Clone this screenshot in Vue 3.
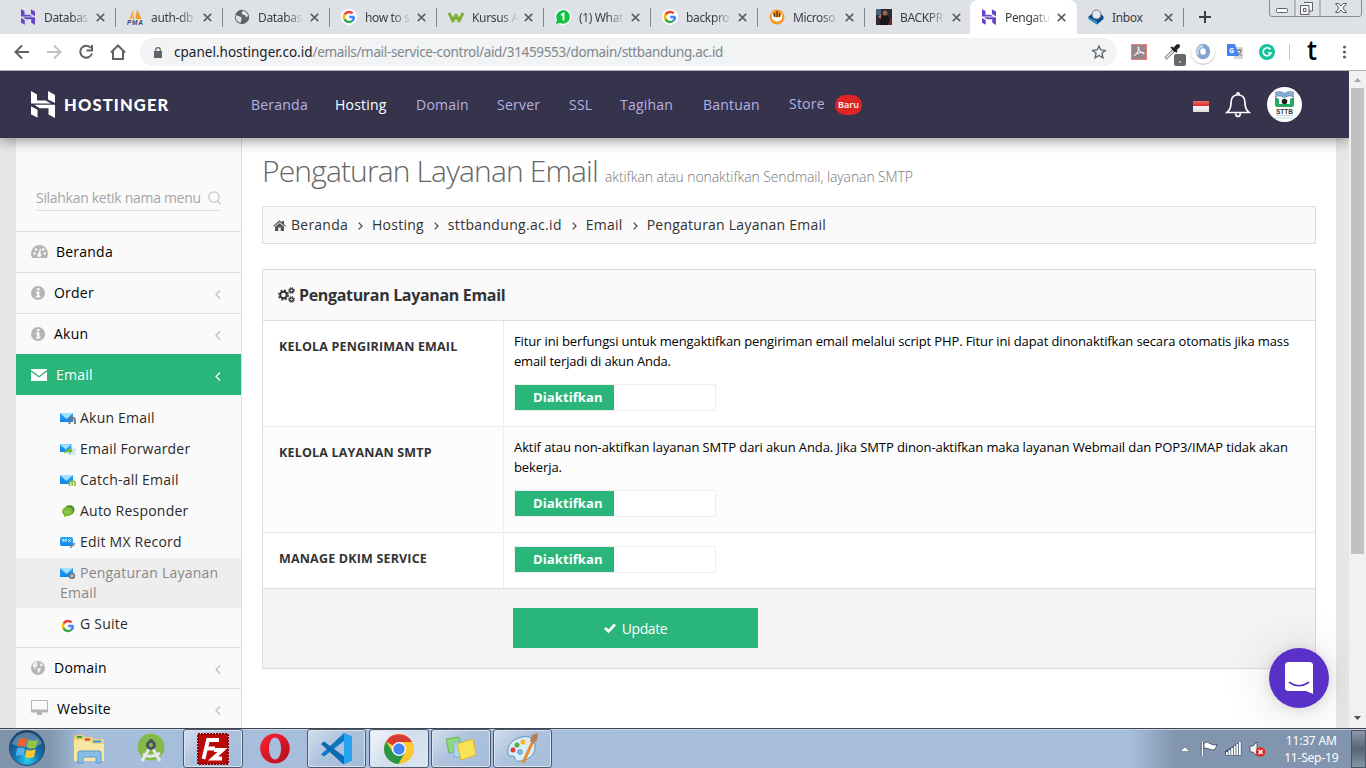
<script setup>
const tabs = [
  { icon: 'host', title: 'Databas' },
  { icon: 'pma', title: 'auth-db' },
  { icon: 'globe', title: 'Databas' },
  { icon: 'google', title: 'how to s' },
  { icon: 'w', title: 'Kursus A' },
  { icon: 'wa', title: '(1) What' },
  { icon: 'google', title: 'backpro' },
  { icon: 'udin', title: 'Microso' },
  { icon: 'photo', title: 'BACKPR' },
  { icon: 'host', title: 'Pengatu', active: true },
  { icon: 'inbox', title: 'Inbox', full: true },
]
const nav = [
  { t: 'Beranda', c: 'n1' },
  { t: 'Hosting', c: 'n2' },
  { t: 'Domain', c: 'n3' },
  { t: 'Server', c: 'n4' },
  { t: 'SSL', c: 'n5' },
  { t: 'Tagihan', c: 'n6' },
  { t: 'Bantuan', c: 'n7' },
]
const topMenu = [
  { icon: 'dash', t: 'Beranda', arrow: false },
  { icon: 'info', t: 'Order', arrow: true },
  { icon: 'info', t: 'Akun', arrow: true },
  { icon: 'mail', t: 'Email', arrow: true, active: true },
]
const sub = [
  { icon: 'person', t: 'Akun Email' },
  { icon: 'fwd', t: 'Email Forwarder' },
  { icon: 'down', t: 'Catch-all Email' },
  { icon: 'chat', t: 'Auto Responder' },
  { icon: 'mx', t: 'Edit MX Record' },
  { icon: 'gear', t: 'Pengaturan Layanan Email', active: true },
  { icon: 'google', t: 'G Suite' },
]
const bottomMenu = [
  { icon: 'world', t: 'Domain', arrow: true },
  { icon: 'desk', t: 'Website', arrow: true },
]
const crumbs = ['Beranda', 'Hosting', 'sttbandung.ac.id', 'Email', 'Pengaturan Layanan Email']
const rows = [
  {
    label: 'KELOLA PENGIRIMAN EMAIL',
    lines: [
      'Fitur ini berfungsi untuk mengaktifkan pengiriman email melalui script PHP. Fitur ini dapat dinonaktifkan secara otomatis jika mass',
      'email terjadi di akun Anda.',
    ],
  },
  {
    label: 'KELOLA LAYANAN SMTP',
    lines: [
      'Aktif atau non-aktifkan layanan SMTP dari akun Anda. Jika SMTP dinon-aktifkan maka layanan Webmail dan POP3/IMAP tidak akan',
      'bekerja.',
    ],
  },
  { label: 'MANAGE DKIM SERVICE', lines: [] },
]
const bars = [3, 5, 7, 9, 11, 13]
</script>

<template>
  <div class="screen">
    <svg class="defs" width="0" height="0">
      <defs>
        <linearGradient id="gm" x1="0" y1="0" x2="0" y2="1">
          <stop offset="0" stop-color="#2ba6f2" /><stop offset="1" stop-color="#0a86ea" />
        </linearGradient>
        <radialGradient id="gorb" cx=".5" cy=".85" r=".85">
          <stop offset="0" stop-color="#2ad0f0" /><stop offset=".4" stop-color="#1575b4" /><stop offset="1" stop-color="#16406e" />
        </radialGradient>
        <linearGradient id="gop" x1="0" y1="0" x2="1" y2="1">
          <stop offset="0" stop-color="#ff2136" /><stop offset="1" stop-color="#b20d18" />
        </linearGradient>
        <symbol id="host" viewBox="0 0 24 27">
          <path d="M0 0 6 3.4V9.5H14.5L20 12.6H0ZM17 0 24 4V12L17 8.4ZM24 13.8V27L17.5 23.4V17.3H8.5L3.4 13.8ZM0 15.2 6.5 18.7V26.7L0 23.2Z" fill="currentColor" />
        </symbol>
        <symbol id="google" viewBox="0 0 16 16">
          <circle cx="8" cy="8" r="8" fill="#fff" />
          <g fill="none" stroke-width="2.5">
            <path d="M3.6 5.6A5 5 0 0 1 11.6 4.4" stroke="#ea4335" />
            <path d="M3.7 5.4A5 5 0 0 0 3.7 10.6" stroke="#fbbc05" />
            <path d="M3.6 10.4A5 5 0 0 0 11.2 11.9" stroke="#34a853" />
            <path d="M8.2 8H13.5M13 8A5 5 0 0 1 11.2 11.9" stroke="#4285f4" />
          </g>
        </symbol>
        <symbol id="pma" viewBox="0 0 16 16">
          <path d="M6 1 7 10H2.5ZM10 0 14.5 10H8.5Z" fill="#f79a1f" /><path d="M6 3 4 10H6Z" fill="#fbc46c" />
          <text x="0" y="15.5" font-size="6.5" font-weight="700" font-style="italic" font-family="Liberation Sans, sans-serif" textLength="16" fill="#3d4372">PMA</text>
        </symbol>
        <symbol id="globe" viewBox="0 0 16 16">
          <circle cx="8" cy="8" r="7.2" fill="#5f6368" />
          <path d="M2 6Q4 7 6 7.5T7.5 10 6.5 14Q2 12.5 1.7 8ZM9 1.5 7.5 4 9 6H11L12 8.5 14.2 7Q13 2.5 9 1.5Z" fill="#dee1e6" />
        </symbol>
        <symbol id="w" viewBox="0 0 16 16"><path d="M1 4 5 12 8 6 11 12 15 4" fill="none" stroke="#7eac35" stroke-width="3" stroke-linejoin="round" /></symbol>
        <symbol id="wa" viewBox="0 0 16 16">
          <circle cx="8" cy="8" r="8" fill="#fff" /><path d="M1 15 2 11A6.8 6.8 0 1 1 5 14Z" fill="#12c143" />
          <path d="M6 6 8.5 4.5V11.5" fill="none" stroke="#fff" stroke-width="1.8" />
        </symbol>
        <symbol id="udin" viewBox="0 0 16 16">
          <circle cx="8" cy="8" r="7.5" fill="#f39a22" /><path d="M2.5 3 4.5 7Q8 10 11.5 7L13.5 3 13 10Q8 15 3 10Z" fill="#fff" />
          <path d="M5.5 4V8M8 2V8M10.5 4V8" stroke="#513015" stroke-width="1.3" />
        </symbol>
        <symbol id="photo" viewBox="0 0 16 16">
          <path d="M0 0H16V16H0Z" fill="#2d2a32" /><path d="M0 0H5V6H0Z" fill="#45637f" /><path d="M11 9H16V16H11Z" fill="#6c2632" />
          <circle cx="9" cy="4" r="2.5" fill="#8d6355" /><path d="M2 8 5 5V10Z" fill="#a77866" /><path d="M5 8Q9 5 14 9L12 16H4Z" fill="#17161c" />
        </symbol>
        <symbol id="inbox" viewBox="0 0 16 16">
          <path d="M.5 7.5 5 4H12L15.5 7.5V10L9 15.5 .5 10Z" fill="#0b4d87" /><path d="M1 8.5 9 12.5V15L1 10Z" fill="#2da1dd" /><circle cx="8.5" cy="5.5" r="4.5" fill="#e5e9ed" stroke="#6c7780" />
        </symbol>
        <symbol id="dash" viewBox="0 0 17 13">
          <path d="M0 8.5A8.5 8.5 0 0 1 17 8.5Q17 11 15.8 13H1.2Q0 11 0 8.5Z" fill="#b5b5b5" />
          <g fill="#fafafa"><circle cx="3.5" cy="8.5" r="1.2" /><circle cx="5" cy="4.5" r="1.2" /><circle cx="12.3" cy="4.5" r="1.2" /><circle cx="13.8" cy="8.5" r="1.2" /><circle cx="8.3" cy="10" r="2" /><path d="M7.5 9 9 3.5H10L9 10Z" /></g>
        </symbol>
        <symbol id="info" viewBox="0 0 14 14">
          <circle cx="7" cy="7" r="7" fill="#b5b5b5" /><path d="M6 2H8.5V4.2H6ZM5 5.5H8.5V10H9.5V11.5H4.8V10H6V7H5Z" fill="#fafafa" />
        </symbol>
        <symbol id="mail" viewBox="0 0 16 12"><path d="M0 0H16V1L8 7 0 1ZM0 2.8 8 8.6 16 2.8V12H0Z" fill="#fff" /></symbol>
        <symbol id="world" viewBox="0 0 14 14">
          <circle cx="7" cy="7" r="7" fill="#b5b5b5" /><path d="M4 1.5 7 1 5.5 3 7 5 4.5 5.5 5 8 3 7 1.5 4ZM7 7 10 7.5 9 9.5 7.5 12.5 6.5 9.5ZM10 2 12 4.5 10.5 5.5 8.5 4Z" fill="#f4f4f4" />
        </symbol>
        <symbol id="desk" viewBox="0 0 17 15"><path d="M.5.5H16.5V11.5H.5Z" fill="none" stroke="#b5b5b5" /><path d="M0 9.5H17V12.5H0ZM6 12.5H11V15H6Z" fill="#b5b5b5" /></symbol>
        <symbol id="env" viewBox="0 0 16 12"><path d="M0 1H13V10H0Z" fill="url(#gm)" /><path d="M0 1H13L6.500 7Z" fill="#a4e0ff" /></symbol>
        <symbol id="person" viewBox="0 0 16 12"><use href="#env" width="16" height="12" /><path d="M9.500 12V8.500A2.700 2.700 0 0 1 14.900 8.500V12" fill="none" stroke="#777" stroke-width="2" /></symbol>
        <symbol id="fwd" viewBox="0 0 16 12"><path d="M8 5H16V12H7Z" fill="#d0eafa" /><use href="#env" width="14" height="11" /><path d="M4 11Q5 6 9 6V4L13 8 9 11V9Q6 9 4 11Z" fill="#79b839" /></symbol>
        <symbol id="down" viewBox="0 0 16 12"><use href="#env" width="16" height="12" /><circle cx="12.300" cy="10" r="3" fill="#fff" stroke="#82bd38" stroke-width="1.500" /><path d="M12.300 8.200V11.700" fill="none" stroke="#82bd38" stroke-width="2" /></symbol>
        <symbol id="chat" viewBox="0 0 16 12"><ellipse cx="9.500" cy="5" rx="5" ry="4.800" fill="#488a22" /><ellipse cx="7.500" cy="6.500" rx="5.500" ry="4.500" fill="#7dba37" /><path d="M4 9V12L8 10.500Z" fill="#7dba37" /><path d="M4.500 7H10.500" stroke="#e4f2cc" stroke-dasharray="1 1" /></symbol>
        <symbol id="mx" viewBox="0 0 16 12"><rect y="1" width="13" height="9" rx="2" fill="url(#gm)" /><path d="M3 6V3L4.500 5 6 3V6M8 3 11 6M11 3 8 6" fill="none" stroke="#fff" stroke-width=".8" /><path d="M10 12 15 7M12.500 7.500 14.500 9.500" fill="none" stroke="#858d94" stroke-width="1.500" /></symbol>
        <symbol id="gear" viewBox="0 0 16 12"><use href="#env" width="16" height="12" /><circle cx="12" cy="9" r="2.300" fill="#ccc" stroke="#777" stroke-width="1.800" /></symbol>
      </defs>
    </svg>

    <header class="tabs">
      <div v-for="(tab, i) in tabs" :key="i" class="tab" :class="{ active: tab.active, presep: i === 8 }">
        <svg class="fav" :class="tab.icon"><use :href="'#' + tab.icon" /></svg>
        <span class="tt" :class="{ fade: !tab.full }">{{ tab.title }}</span>
        <svg class="x" viewBox="0 0 9 9"><path d="M.8.8 8.200 8.200M8.200.8.8 8.200" stroke="#5f6368" stroke-width="1.700" /></svg>
      </div>
      <svg class="plus" viewBox="0 0 12 12"><path d="M6 0V12M0 6H12" stroke="#3c4043" stroke-width="2" /></svg>
      <svg class="winctl" viewBox="0 0 94 18">
        <path d="M.5 0V14Q.5 16.500 3 16.500H90Q92.500 16.500 92.500 14V0M26 0V16.500M51 0V16.500" fill="none" stroke="#8a8d92" />
        <rect x="7.500" y="8.500" width="11" height="4" rx="1" fill="#fff" stroke="#5d5f63" />
        <path d="M35 2.500H43.500V11H40M31.500 5.500H40V14.500H31.500ZM34.500 8.500H37V11.500H34.500Z" fill="#f6f6f6" stroke="#5d5f63" />
        <path d="M66.500 3.500H70L72 6 74 3.500H77.500L74 8 77.500 12.500H74L72 10 70 12.500H66.500L70 8Z" fill="#f6f6f6" stroke="#5d5f63" />
      </svg>
    </header>

    <div class="toolbar">
      <svg class="navbtns" viewBox="0 0 130 36">
        <g fill="none" stroke="#5f6368" stroke-width="2">
          <path d="M29 18H16M22 11.500 15.500 18 22 24.500" />
          <path d="M47 18H60M54 11.500 60.500 18 54 24.500" stroke="#bfc1c4" />
          <path d="M91 14A6 6 0 1 0 92 19.500M92 11V16.500H86.500" />
          <path d="M111 18.500 118 11.500 125 18.500M113 17V25H123V17" />
        </g>
      </svg>
      <div class="omni">
        <svg class="lock" viewBox="0 0 8 11"><path d="M0 4H8V11H0Z" fill="#5f6368" /><path d="M1.700 4.500V3A2.300 2.300 0 0 1 6.300 3V4.500" fill="none" stroke="#5f6368" stroke-width="1.200" /></svg>
        <span class="url"><b>cpanel.hostinger.co.id</b>/emails/mail-service-control/aid/31459553/domain/sttbandung.ac.id</span>
        <svg class="star" viewBox="0 0 14 14"><path d="M7 1 8.800 5 13.300 5.400 9.900 8.300 11 12.800 7 10.400 3 12.800 4.100 8.300.7 5.400 5.200 5Z" fill="none" stroke="#5f6368" stroke-width="1.300" /></svg>
      </div>
      <svg class="exts" viewBox="0 0 240 36">
        <rect x="5.500" y="10.500" width="15" height="15" fill="#94868a" stroke="#ef8273" />
        <path d="M8 22Q13 18 13 13.500 12 12 12 14 13 18 18 20 19 18 14 18.500 9 20 8 22" fill="none" stroke="#fff" />
        <path d="M39.500 24.500 48 16" stroke="#777" stroke-width="3.200" /><path d="M40 24 48 16" stroke="#f4f4f4" stroke-width="1.600" /><path d="M45 13 51 18" stroke="#222" stroke-width="2" /><path d="M48.500 15.500 52 12" stroke="#222" stroke-width="4" stroke-linecap="round" />
        <rect x="48" y="20" width="12" height="12" rx="2" fill="#686868" /><path d="M53 28H55" stroke="#fff" />
        <circle cx="77" cy="18.500" r="12.500" fill="#d8d8d8" /><circle cx="77" cy="17.500" r="12" fill="#fff" />
        <ellipse cx="77" cy="17.500" rx="5" ry="5.500" fill="none" stroke="#82a5ce" stroke-width="4.500" /><path d="M72 21A6 6 0 0 1 77 12" fill="none" stroke="#c0d2e8" stroke-width="3" />
        <rect x="108" y="13" width="9" height="12" fill="#d8d8d8" /><path d="M101 10H109L113 22H101Z" fill="#4384f3" />
        <text x="103" y="19" font-size="7" font-weight="700" font-family="Open Sans, sans-serif" fill="#fff">G</text><path d="M110 16H116M113 15V17M111 22Q115 20 115 16M111.500 18 116 22" fill="none" stroke="#6f7d8b" />
        <circle cx="141" cy="18" r="8" fill="#15c39a" /><path d="M144.500 15.500A4 4 0 1 0 145 19H142" fill="none" stroke="#fff" stroke-width="1.600" />
        <path d="M163.500 10V26" stroke="#c6c8ca" />
        <text x="181" y="26" font-size="27" font-weight="600" font-family="Open Sans, sans-serif" fill="#000" textLength="10" lengthAdjust="spacingAndGlyphs">t</text>
        <g fill="#5f6368"><circle cx="218.500" cy="13" r="1.600" /><circle cx="218.500" cy="18" r="1.600" /><circle cx="218.500" cy="23" r="1.600" /></g>
      </svg>
    </div>

    <main class="page">
      <div class="view">
        <div class="top">
          <svg class="mark"><use href="#host" /></svg>
          <span class="brand">HOSTINGER</span>
          <nav>
            <span v-for="n in nav" :key="n.t" :class="[n.c, { on: n.t === 'Hosting' }]">{{ n.t }}</span>
            <span class="n8">Store</span>
            <em>Baru</em>
          </nav>
          <div class="flag"></div>
          <svg class="bell" viewBox="0 0 24 26"><path d="M1 20.500Q5 17 5 11 5 3.500 11 3V1.500Q12 0 13 1.500V3Q19 3.500 19 11 19 17 23 20.500ZM9.500 21.500Q10 24.500 12 24.500T14.500 21.500" fill="none" stroke="#fff" stroke-width="1.700" /></svg>
          <svg class="avatar" viewBox="0 0 35 35">
            <circle cx="17.500" cy="17.500" r="17.500" fill="#fff" />
            <path d="M8 5Q14 3 17.500 6 21 3 27 5V10Q21 8 17.500 11 14 8 8 10Z" fill="#4a80b4" /><path d="M8 6.500Q14 4.500 17.500 7.500 21 4.500 27 6.500M8 8.500Q14 6.500 17.500 9.500 21 6.500 27 8.500" fill="none" stroke="#fff" stroke-width=".7" />
            <path d="M8 10 12 12V17H23V12L27 10V18Q27 20 25 20H10Q8 20 8 18Z" fill="#29a865" /><circle cx="17.500" cy="14.500" r="2.800" fill="#222" />
            <text x="9" y="26.500" font-size="6.500" font-weight="700" font-family="Liberation Sans, sans-serif" fill="#333" textLength="17">STTB</text>
            <path d="M9 28.500H26M7 31H28" stroke="#a9cbe2" stroke-dasharray="2 .6" />
          </svg>
        </div>

        <div class="body">
          <aside>
            <div class="search">
              <div class="field"><span>Silahkan ketik nama menu</span>
                <svg viewBox="0 0 13 14"><circle cx="6" cy="6" r="5.200" fill="none" stroke="#c9c9c9" stroke-width="1.300" /><path d="M9.500 10 12.500 13.500" stroke="#c9c9c9" stroke-width="1.300" /></svg>
              </div>
            </div>
            <div v-for="m in topMenu" :key="m.t" class="item" :class="{ active: m.active }">
              <svg class="mi" :class="m.icon"><use :href="'#' + m.icon" /></svg><span>{{ m.t }}</span>
              <svg v-if="m.arrow" class="arr" viewBox="0 0 6 9"><path d="M5 .5 1 4.500 5 8.500" fill="none" stroke="currentColor" stroke-width="1.200" /></svg>
            </div>
            <div class="subs">
              <div v-for="s in sub" :key="s.t" class="sub" :class="{ cur: s.active }">
                <svg class="si" :class="{ g: s.icon === 'google' }"><use :href="'#' + s.icon" /></svg>{{ s.t }}
              </div>
            </div>
            <div v-for="m in bottomMenu" :key="m.t" class="item">
              <svg class="mi" :class="m.icon"><use :href="'#' + m.icon" /></svg><span>{{ m.t }}</span>
              <svg class="arr" viewBox="0 0 6 9"><path d="M5 .5 1 4.500 5 8.500" fill="none" stroke="currentColor" stroke-width="1.200" /></svg>
            </div>
          </aside>

          <section class="content">
            <h1><span>Pengaturan Layanan Email</span><small>aktifkan atau nonaktifkan Sendmail, layanan SMTP</small></h1>
            <div class="crumbs">
              <svg class="home" viewBox="0 0 13 11"><path d="M0 6 6.500.3 9 2.500V1H11V4.300L13 6 12.300 6.800 6.500 1.900.7 6.800ZM2 6.800 6.500 3 11 6.800V11H7.700V7.500H5.300V11H2Z" fill="#555" /></svg>
              <template v-for="(c, i) in crumbs" :key="c">
                <svg v-if="i" class="sep" viewBox="0 0 5 8"><path d="M.7.7 4 4 .7 7.300" fill="none" stroke="#444" stroke-width="1.200" /></svg>
                <span :class="'c' + i">{{ c }}</span>
              </template>
            </div>
            <div class="panel">
              <div class="phead">
                <svg class="cogs" viewBox="0 0 17 16"><g fill="none" stroke="#2f2f2f"><circle cx="5.500" cy="8" r="3.300" stroke-width="2" /><circle cx="5.500" cy="8" r="4.800" stroke-width="1.400" stroke-dasharray="2 1.770" /><circle cx="13.500" cy="3.500" r="1.800" stroke-width="1.400" /><circle cx="13.500" cy="3.500" r="2.900" stroke-dasharray="1.200 1.080" /><circle cx="13.500" cy="12.500" r="1.800" stroke-width="1.400" /><circle cx="13.500" cy="12.500" r="2.900" stroke-dasharray="1.200 1.080" /></g></svg>
                <span>Pengaturan Layanan Email</span>
              </div>
              <div v-for="(r, i) in rows" :key="r.label" class="row" :class="'r' + i">
                <div class="lab"><span>{{ r.label }}</span></div>
                <div class="val">
                  <p v-if="r.lines.length"><span v-for="(l, j) in r.lines" :key="j" :class="'l' + j">{{ l }}</span></p>
                  <div class="switch"><b><span>Diaktifkan</span></b></div>
                </div>
              </div>
              <div class="foot">
                <div class="btn"><svg viewBox="0 0 12 10"><path d="M1 5 4.500 8.300 11 1.500" fill="none" stroke="#fff" stroke-width="2.600" /></svg><span>Update</span></div>
              </div>
            </div>
          </section>
          <div class="gutter"></div>
        </div>

        <svg class="chatbub" viewBox="0 0 60 60">
          <circle cx="30" cy="30" r="30" fill="#5a31c8" />
          <path d="M19.500 14H40.500Q44 14 44 17.500V46L37 43H19.500Q16 43 16 39.500V17.500Q16 14 19.500 14Z" fill="#fff" />
          <path d="M20.500 34.500Q30 41 39.500 34.500" fill="none" stroke="#5a31c8" stroke-width="1.700" stroke-linecap="round" />
        </svg>
      </div>
      <div class="scroll">
        <svg viewBox="0 0 9 5"><path d="M1 5 4.500 1 8 5Z" fill="#a3a3a3" /></svg>
        <div class="thumb"></div>
        <svg class="dn" viewBox="0 0 9 5"><path d="M1 0H8L4.500 4Z" fill="#505050" /></svg>
      </div>
    </main>

    <footer class="task">
      <svg class="orb" viewBox="0 0 36 36">
        <circle cx="18" cy="18" r="17.500" fill="url(#gorb)" stroke="#2d435c" /><path d="M3 14A15.500 15.500 0 0 1 33 14Q18 20 3 14Z" fill="#fff" opacity=".28" />
        <path d="M10 9Q14 7 18 9L16.500 17Q12.500 15 8.500 17Z" fill="#ee632b" /><path d="M19.500 9.700Q24 12 29 9.500L27 17.500Q22 20 18 17.600Z" fill="#92c83e" />
        <path d="M8 18.500Q12 16.500 16 18.700L14.500 26Q11 24 6.800 26Z" fill="#52b2ea" /><path d="M17.500 19.500Q22 21.500 26.700 19L25 27Q20 29 16 26.700Z" fill="#fdc92d" />
      </svg>
      <svg class="exp" viewBox="0 0 32 30"><path d="M1 3Q1 1 3 1H10L12 3H19L21 5H30Q31 5 31 7V27H1Z" fill="#ecd07c" /><path d="M4 2H9V4H4Z" fill="#24a23c" /><path d="M12 4.500H17V6.500H12Z" fill="#d64230" /><path d="M20 6.500H28V8.500H20Z" fill="#3194e0" /><path d="M1 6H10L12 8H18L20 10H31V27H1Z" fill="#f8e6a4" /><path d="M5 29V19Q5 17 7 17H26Q28 17 28 19V29H23V23H10V29Z" fill="#86bee6" stroke="#5b9cd0" /></svg>
      <svg class="studio" viewBox="0 0 28 32"><circle cx="14" cy="14" r="13.500" fill="#86b94c" /><path d="M12 16 5 28M16 16 23 28M6 21Q14 26 23 20" fill="none" stroke="#e6e9ec" stroke-width="3" /><circle cx="14" cy="12" r="3.500" fill="none" stroke="#4b5560" stroke-width="3" /><path d="M14 6V9" stroke="#4b5560" stroke-width="3" /></svg>
      <div class="tb fz"><svg viewBox="0 0 32 32"><rect x="1" y="1" width="30" height="30" fill="#bb0a0a" stroke="#8c0303" stroke-width="2" stroke-dasharray="2 1" /><path d="M6.500 26 11 7H22M9 15.500H18M17 17H25.500L16 25.500H25" fill="none" stroke="#fff" stroke-width="3.800" /></svg></div>
      <svg class="opera" viewBox="0 0 30 31"><path fill-rule="evenodd" d="M15 .5A14.800 15 0 1 1 14.900.5ZM15 4.500C11 4.500 9 10 9 15.500S11 26.500 15 26.500 21 21 21 15.500 19 4.500 15 4.500Z" fill="url(#gop)" /></svg>
      <div class="tb vs"><svg viewBox="0 0 32 32"><path d="M23 0 31 3.500V27.500L23 31 23 8 3 23.500 0 21.500Z" fill="#0b79c4" /><path d="M0 11 3 8.500 24 24V31L22 31Z" fill="#0a6bb0" /><path d="M23 0 31 3.500V27.500L23 31Z" fill="#27a4f0" /></svg></div>
      <div class="tb lit ch"><svg viewBox="0 0 30 30"><circle cx="15" cy="15" r="15" fill="#fcc934" /><path d="M15 15 2 7.500A15 15 0 0 1 28 8H15Z" fill="#d93c34" /><path d="M2 7.500A15 15 0 0 0 14.500 30L21 18.500 9 18.500Z" fill="#289647" /><circle cx="15" cy="15" r="7" fill="#fff" /><circle cx="15" cy="15" r="5.700" fill="#4285f4" /></svg></div>
      <div class="tb st"><svg viewBox="0 0 32 26"><path d="M1 3 14 1 17 14 4 17Z" fill="#90d67c" stroke="#6bb65e" /><path d="M9 6H22V21H9Z" fill="#a8d8f6" stroke="#7ab4e0" /><path d="M12 8 28 3 31 19 16 24Z" fill="#f9e158" stroke="#d8b92c" /></svg></div>
      <div class="tb pt"><svg viewBox="0 0 34 32"><path d="M2 21Q0 10 12 5 26 0 29 11 31 25 15 28 9 29 9 25 8 22 5 23 3 24 2 21Z" fill="#d9ecf8" stroke="#5e94b7" /><circle cx="7" cy="17" r="2.500" fill="#dc3f35" /><circle cx="11" cy="12" r="2.500" fill="#56ae3d" /><circle cx="17" cy="9" r="2.500" fill="#f5b82d" /><circle cx="14" cy="19" r="2.200" fill="#9ccbe7" stroke="#4283b3" /><path d="M17 30 26 10" stroke="#ec8a2c" stroke-width="3" /><path d="M24 8 26 2 32 0 31 7 27 11Z" fill="#b58054" /></svg></div>
      <div class="tray">
        <svg viewBox="0 0 90 30">
          <path d="M3.500 17.500 8 13 12.500 17.500Z" fill="#fff" stroke="#5a6b80" stroke-width=".6" />
          <path d="M25.500 8V22" stroke="#3c4857" stroke-width="3.200" /><path d="M25.500 8V22" stroke="#fff" stroke-width="1.600" /><path d="M27 9Q30 7 33 9.500T40 10.500L38 15.500Q35 16.500 32 15T27 14.500Z" fill="#fff" stroke="#3c4857" stroke-width=".8" />
          <path d="M48 21.500V17L64.500 7V21.500Z" fill="#4b5a6e" />
          <rect v-for="(h, i) in bars" :key="h" :x="49 + i * 2.600" :y="21 - h" width="1.800" :height="h" fill="#fff" />
          <path d="M73 12H76L80 8V22L76 18H73Z" fill="#f5f5f5" stroke="#3c4857" stroke-width=".8" /><circle cx="83.500" cy="18" r="4.800" fill="#da2d24" /><path d="M81.500 16 85.500 20M85.500 16 81.500 20" stroke="#fff" stroke-width="1.600" />
        </svg>
      </div>
      <div class="clock"><span class="k1">11:37 AM</span><span class="k2">11-Sep-19</span></div>
      <div class="peek"></div>
    </footer>
  </div>
</template>

<style>
html, body { margin: 0; overflow: hidden; }
</style>

<style scoped>
* { box-sizing: border-box; }
.screen { width: 1366px; height: 768px; overflow: hidden; display: flex; flex-direction: column; font-family: "Open Sans", "Noto Sans", sans-serif; color: #000; background: #fff; white-space: nowrap; }
.screen svg { display: block; flex: none; overflow: visible; }
.screen .defs { display: block; position: absolute; }

.tabs { height: 34px; flex: none; background: #dee1e6; display: flex; padding-left: 9px; position: relative; }
.tab { width: 107px; height: 34px; flex: none; display: flex; align-items: center; padding-left: 11px; position: relative; }
.tab::after { content: ""; position: absolute; right: 0; top: 8px; height: 19px; width: 1px; background: #85888c; }
.tab.presep::after, .tab.active::after { display: none; }
.tab.active { background: #fff; border-radius: 8px 8px 0 0; margin-left: -2px; width: 107px; padding-left: 11px; }
.fav { width: 16px; height: 16px; color: #6747c7; }
.fav.host { width: 14px; margin: 0 1px; }
.tt { margin-left: 8px; width: 48px; font-family: "Noto Sans", sans-serif; font-size: 12px; letter-spacing: -.35px; color: #3c4043; }
.tt.fade { -webkit-mask-image: linear-gradient(90deg, #000 58%, transparent 96%); mask-image: linear-gradient(90deg, #000 58%, transparent 96%); }
.x { width: 9px; height: 9px; margin-left: 4px; }
.plus { width: 12px; height: 12px; margin: 11px 0 0 15px; }
.winctl { width: 94px; height: 18px; position: absolute; left: 1269px; top: 0; }

.toolbar { height: 37px; flex: none; display: flex; border-bottom: 1px solid #b0b0b3; background: #fff; }
.navbtns { width: 130px; height: 36px; }
.omni { margin: 4px 0 0 10px; width: 977px; height: 28px; border-radius: 14px; background: #f1f3f4; display: flex; align-items: center; padding-left: 14px; }
.lock { width: 8px; height: 11px; }
.url { margin-left: 12px; width: 918px; font-family: "Noto Sans", sans-serif; font-size: 13.500px; letter-spacing: -.34px; color: #80868b; }
.url b { font-weight: 400; letter-spacing: .02px; color: #202124; }
.star { width: 14px; height: 14px; }
.exts { width: 240px; height: 36px; margin-left: 9px; }

.page { height: 657px; flex: none; display: flex; }
.view { width: 1349px; position: relative; overflow: hidden; background: #fff; }
.top { height: 67px; background: #36344d; box-shadow: 0 1px 14px rgba(0, 0, 0, .5); position: relative; z-index: 2; display: flex; align-items: center; padding-left: 31px; }
.mark { width: 24px; height: 27px; color: #fff; }
.brand { width: 105px; margin-left: 9px; font-family: "Lato", sans-serif; font-weight: 900; font-size: 16.500px; color: #fff; letter-spacing: 1.150px; }
nav { width: 943px; margin-left: 82px; display: flex; align-items: center; font-size: 14px; letter-spacing: .22px; color: #b6b0e2; }
nav .on { color: #fff; }
nav .n1 { width: 84px; } nav .n2 { width: 81px; } nav .n3 { width: 81px; } nav .n4 { width: 72px; }
nav .n5 { width: 51px; } nav .n6 { width: 83px; } nav .n7 { width: 86px; } nav .n8 { width: 46px; margin-top: -2px; }
nav em { width: 27px; height: 20px; line-height: 20px; border-radius: 10px; background: #e02424; color: #fff; font-size: 9px; letter-spacing: 0; font-style: normal; font-weight: 600; text-align: center; }
.flag { width: 16px; height: 11px; margin-top: 4px; margin-left: -1px; background: linear-gradient(#f06a62, #dc1f1f 50%, #f8f6f6 50%, #dedada); }
.bell { width: 24px; height: 26px; margin-left: 17px; }
.avatar { width: 35px; height: 35px; margin-left: 17px; }

.body { display: flex; height: 590px; padding-left: 16px; background: #e7e7e7; }
aside { width: 226px; flex: none; background: #fafafa; border-right: 1px solid #ddd; font-size: 14px; letter-spacing: .22px; overflow: hidden; }
.search { height: 94px; border-bottom: 1px solid #ddd; padding: 47px 20px 0; }
.field { display: flex; align-items: center; justify-content: space-between; height: 26px; border-bottom: 1px solid #ddd; color: #a5a5a5; font-size: 14px; letter-spacing: -.3px; }
.field svg { width: 13px; height: 14px; }
.item { height: 41px; border-bottom: 1px solid #ddd; display: flex; align-items: center; padding: 0 20px 0 15px; }
.item span { margin: -2px 0 0 9px; flex: 1; }
.item.active { background: #2ab57a; color: #fff; margin-top: -1px; border: 0; padding-top: 1px; }
.mi { width: 14px; height: 14px; margin-top: -1px; }
.mi.dash { width: 17px; height: 13px; margin-right: -1px; } .mi.mail { width: 16px; height: 12px; } .mi.desk { width: 17px; height: 15px; margin-top: -3px; }
.arr { width: 6px; height: 9px; color: #bbb; margin-top: 3px; }
.active .arr { color: #fff; }
.subs { padding: 8px 0; border-bottom: 1px solid #ddd; height: 253px; color: #2b2b2b; }
.sub { padding: 5px 20px 5px 44px; height: 30px; line-height: 20px; margin-bottom: 1px; white-space: normal; }
.sub.cur { background: #eee; color: #888; height: 50px; }
.sub .si { display: inline-block; width: 16px; height: 12px; margin-right: 4px; vertical-align: -1px; }
.sub .si.g { height: 16px; vertical-align: -5px; }

.content { width: 1094px; background: #fff; padding: 0 20px; }
.gutter { width: 13px; }
h1 { margin: 0; height: 68px; padding-top: 12px; font-weight: 300; font-size: 30px; letter-spacing: -.86px; line-height: 41px; color: #666; display: flex; align-items: baseline; }
h1 small { font-size: 14px; line-height: 20px; letter-spacing: -.1px; color: #777; margin-left: 7px; }
.crumbs { height: 38px; border: 1px solid #ddd; background: #fafafa; display: flex; align-items: center; padding-left: 10px; font-size: 14px; letter-spacing: .24px; color: #333; }
.crumbs span { margin-top: -2px; }
.crumbs .c2 { letter-spacing: .32px; }
.home { width: 13px; height: 11px; margin-right: 5px; }
.sep { width: 5px; height: 8px; margin: 1px 9px 0 10px; }
.panel { margin-top: 25px; height: 400px; border: 1px solid #ddd; }
.phead { height: 51px; background: #fafafa; border-bottom: 1px solid #ddd; display: flex; align-items: center; padding-left: 15px; font-size: 16px; letter-spacing: -.33px; font-weight: 700; color: #333; }
.phead span { margin-top: -1px; }
.cogs { width: 17px; height: 16px; margin-right: 4px; }
.row { height: 106px; display: flex; border-bottom: 1px solid #eaeaea; }
.r1 { background: #fcfcfc; }
.r2 { height: 56px; border-color: #ddd; }
.lab { width: 241px; border-right: 1px solid #eee; padding: 16px 0 0 16px; font-size: 12.500px; letter-spacing: .18px; font-weight: 700; line-height: 20px; color: #333; }
.val { padding: 10px 0 0 10px; font-size: 13px; }
.val p { margin: 0 0 13px; line-height: 20px; display: flex; flex-direction: column; align-items: flex-start; letter-spacing: -.12px; }
.r1 .val p { letter-spacing: -.095px; }
.r0 .l1 { letter-spacing: -.18px; }
.r2 .val { padding-top: 13px; }
.switch { width: 202px; height: 27px; border: 1px solid #eee; background: #fff; }
.switch b { display: block; width: 99px; height: 25px; background: #2ab57a; color: #fff; padding-left: 18px; line-height: 24px; font-size: 13px; letter-spacing: .1px; }
.foot { background: #f4f4f4; height: 79px; padding: 19px 0 0 250px; }
.btn { width: 245px; height: 40px; background: #2ab57a; color: #fff; display: flex; align-items: center; justify-content: center; font-size: 14px; letter-spacing: -.4px; }
.btn svg { width: 12px; height: 10px; margin-right: 6px; }
.chatbub { width: 60px; height: 60px; position: absolute; left: 1269px; top: 577px; border-radius: 50%; box-shadow: 0 1px 12px rgba(0, 0, 0, .12), 0 2px 50px rgba(0, 0, 0, .15); }

.scroll { width: 17px; background: #f1f1f1; display: flex; flex-direction: column; align-items: center; }
.scroll svg { width: 9px; height: 5px; margin-top: 6px; }
.thumb { width: 13px; height: 466px; background: #c1c1c1; margin-top: 6px; }
.scroll .dn { margin-top: 162px; }

.task { height: 40px; flex: none; border-top: 1px solid #40444f; background: linear-gradient(90deg, #7f93ab 0, #8196ae 50px, #a6bedb 82px, #a7bfdc 1130px, #8195ae 1175px, #8195ae); display: flex; align-items: flex-start; padding-left: 9px; box-shadow: inset 0 1px #c8d5e5; z-index: 3; }
.orb { width: 36px; height: 36px; margin-top: 1px; }
.exp { width: 32px; height: 30px; margin: 5px 0 0 28px; }
.studio { width: 28px; height: 32px; margin: 4px 0 0 32px; }
.tb { width: 60px; height: 39px; border: 1px solid #4c596b; border-radius: 3px; box-shadow: inset 0 0 0 1px #d9e4f1; background: linear-gradient(135deg, #d3deed, #adc2dd 45%, #a5bdda); display: flex; align-items: center; justify-content: center; margin-right: 2px; }
.tb.lit { background: linear-gradient(135deg, #f2f6fb, #d2deee 50%, #dde7f4); }
.fz { margin: 0 0 0 18px; } .fz svg { width: 32px; height: 32px; }
.opera { width: 30px; height: 31px; margin: 4px 0 0 17px; }
.vs { margin-left: 17px; } .vs svg { width: 32px; height: 32px; }
.ch { margin-left: 1px; } .ch svg { width: 30px; height: 30px; } .st svg { width: 32px; height: 26px; } .pt svg { width: 34px; height: 32px; }
.tray { margin: 5px 0 0 623px; } .tray svg { width: 90px; height: 30px; }
.clock { width: 76px; margin-left: 6px; margin-right: 2px; padding-top: 3px; color: #fff; font-family: "Noto Sans", sans-serif; font-size: 12px; line-height: 17px; letter-spacing: -.2px; display: flex; flex-direction: column; align-items: center; }
.peek { width: 15px; height: 38px; margin-top: 1px; border: 1px solid #4c5666; background: linear-gradient(#8b98a9, #566476 50%, #8495aa); }
</style>
